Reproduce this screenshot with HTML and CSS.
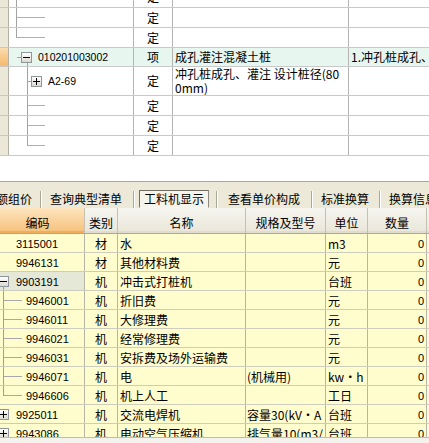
FILE: index.html
```html
<!DOCTYPE html>
<html lang="zh">
<head>
<meta charset="utf-8">
<title>工料机显示</title>
<link rel="stylesheet" href="styles.css">
</head>
<body>
<div class="app">
  <section class="top">
    <div class="tgrid">
      <div class="trow r0">
        <div class="tg"></div>
        <div class="tc t-code la-full"></div>
        <div class="tc t-type">定</div>
        <div class="tc t-name"></div>
        <div class="tc t-desc"></div>
      </div>
      <div class="trow r1">
        <div class="tg"></div>
        <div class="tc t-code la-mid"></div>
        <div class="tc t-type">定</div>
        <div class="tc t-name"></div>
        <div class="tc t-desc"></div>
      </div>
      <div class="trow r2">
        <div class="tg"></div>
        <div class="tc t-code la-end"></div>
        <div class="tc t-type">定</div>
        <div class="tc t-name"></div>
        <div class="tc t-desc"></div>
      </div>
      <div class="trow r3 hl">
        <div class="tg sel"></div>
        <div class="tc t-code l-parent"><span class="tbox minus b1"></span><span class="tcode">010201003002</span></div>
        <div class="tc t-type">项</div>
        <div class="tc t-name">成孔灌注混凝土桩</div>
        <div class="tc t-desc">1.冲孔桩成孔、</div>
      </div>
      <div class="trow r4">
        <div class="tg"></div>
        <div class="tc t-code l-child"><span class="tbox plus b2"></span><span class="tcode">A2-69</span></div>
        <div class="tc t-type">定</div>
        <div class="tc t-name wrap">冲孔桩成孔、灌注 设计桩径(80<br>0mm)</div>
        <div class="tc t-desc"></div>
      </div>
      <div class="trow r5">
        <div class="tg"></div>
        <div class="tc t-code lb-mid"></div>
        <div class="tc t-type">定</div>
        <div class="tc t-name"></div>
        <div class="tc t-desc"></div>
      </div>
      <div class="trow r6">
        <div class="tg"></div>
        <div class="tc t-code lb-mid"></div>
        <div class="tc t-type">定</div>
        <div class="tc t-name"></div>
        <div class="tc t-desc"></div>
      </div>
      <div class="trow r7">
        <div class="tg"></div>
        <div class="tc t-code lb-end"></div>
        <div class="tc t-type">定</div>
        <div class="tc t-name"></div>
        <div class="tc t-desc"></div>
      </div>
    </div>
  </section>

  <section class="bottom">
    <div class="toolbar">
      <span class="tb-item first">定额组价</span>
      <span class="tb-sep s1"></span>
      <span class="tb-item i2">查询典型清单</span>
      <span class="tb-sep s2"></span>
      <span class="tb-item pressed">工料机显示</span>
      <span class="tb-sep s3"></span>
      <span class="tb-item i4">查看单价构成</span>
      <span class="tb-sep s4"></span>
      <span class="tb-item i5">标准换算</span>
      <span class="tb-sep s5"></span>
      <span class="tb-item i6">换算信息</span>
    </div>

    <div class="bwrap">
      <div class="bgrid">
        <div class="bhead">
          <div class="hc c-code sel">编码</div>
          <div class="hc c-type">类别</div>
          <div class="hc c-name">名称</div>
          <div class="hc c-spec">规格及型号</div>
          <div class="hc c-unit">单位</div>
          <div class="hc c-qty">数量</div>
          <div class="hc c-fill"></div>
        </div>

        <div class="brow">
          <div class="bc c-code"><span class="bcode root">3115001</span></div>
          <div class="bc c-type">材</div>
          <div class="bc c-name">水</div>
          <div class="bc c-spec"></div>
          <div class="bc c-unit">m3</div>
          <div class="bc c-qty">0</div>
          <div class="bc c-fill"></div>
        </div>
        <div class="brow">
          <div class="bc c-code"><span class="bcode root">9946131</span></div>
          <div class="bc c-type">材</div>
          <div class="bc c-name">其他材料费</div>
          <div class="bc c-spec"></div>
          <div class="bc c-unit">元</div>
          <div class="bc c-qty">0</div>
          <div class="bc c-fill"></div>
        </div>
        <div class="brow">
          <div class="bc c-code focus bl-parent"><span class="tbox minus bb"></span><span class="bcode">9903191</span></div>
          <div class="bc c-type">机</div>
          <div class="bc c-name">冲击式打桩机</div>
          <div class="bc c-spec"></div>
          <div class="bc c-unit">台班</div>
          <div class="bc c-qty">0</div>
          <div class="bc c-fill"></div>
        </div>
        <div class="brow">
          <div class="bc c-code bl-mid"><span class="bcode child">9946001</span></div>
          <div class="bc c-type">机</div>
          <div class="bc c-name">折旧费</div>
          <div class="bc c-spec"></div>
          <div class="bc c-unit">元</div>
          <div class="bc c-qty">0</div>
          <div class="bc c-fill"></div>
        </div>
        <div class="brow">
          <div class="bc c-code bl-mid"><span class="bcode child">9946011</span></div>
          <div class="bc c-type">机</div>
          <div class="bc c-name">大修理费</div>
          <div class="bc c-spec"></div>
          <div class="bc c-unit">元</div>
          <div class="bc c-qty">0</div>
          <div class="bc c-fill"></div>
        </div>
        <div class="brow">
          <div class="bc c-code bl-mid"><span class="bcode child">9946021</span></div>
          <div class="bc c-type">机</div>
          <div class="bc c-name">经常修理费</div>
          <div class="bc c-spec"></div>
          <div class="bc c-unit">元</div>
          <div class="bc c-qty">0</div>
          <div class="bc c-fill"></div>
        </div>
        <div class="brow">
          <div class="bc c-code bl-mid"><span class="bcode child">9946031</span></div>
          <div class="bc c-type">机</div>
          <div class="bc c-name">安拆费及场外运输费</div>
          <div class="bc c-spec"></div>
          <div class="bc c-unit">元</div>
          <div class="bc c-qty">0</div>
          <div class="bc c-fill"></div>
        </div>
        <div class="brow">
          <div class="bc c-code bl-mid"><span class="bcode child">9946071</span></div>
          <div class="bc c-type">机</div>
          <div class="bc c-name">电</div>
          <div class="bc c-spec">(机械用)</div>
          <div class="bc c-unit">kw·h</div>
          <div class="bc c-qty">0</div>
          <div class="bc c-fill"></div>
        </div>
        <div class="brow">
          <div class="bc c-code bl-end"><span class="bcode child">9946606</span></div>
          <div class="bc c-type">机</div>
          <div class="bc c-name">机上人工</div>
          <div class="bc c-spec"></div>
          <div class="bc c-unit">工日</div>
          <div class="bc c-qty">0</div>
          <div class="bc c-fill"></div>
        </div>
        <div class="brow">
          <div class="bc c-code"><span class="tbox plus bb"></span><span class="bcode">9925011</span></div>
          <div class="bc c-type">机</div>
          <div class="bc c-name">交流电焊机</div>
          <div class="bc c-spec">容量30(kV·A</div>
          <div class="bc c-unit">台班</div>
          <div class="bc c-qty">0</div>
          <div class="bc c-fill"></div>
        </div>
        <div class="brow">
          <div class="bc c-code"><span class="tbox plus bb"></span><span class="bcode">9943086</span></div>
          <div class="bc c-type">机</div>
          <div class="bc c-name">电动空气压缩机</div>
          <div class="bc c-spec">排气量10(m3/</div>
          <div class="bc c-unit">台班</div>
          <div class="bc c-qty">0</div>
          <div class="bc c-fill"></div>
        </div>
      </div>
    </div>
    <div class="hscroll"></div>
  </section>
</div>
</body>
</html>
```

FILE: styles.css
```css
* { box-sizing: border-box; margin: 0; padding: 0; }

html, body {
  width: 429px;
  height: 443px;
  overflow: hidden;
  background: #ffffff;
}

body {
  font-family: "Noto Sans CJK SC", sans-serif;
  font-size: 12px;
  color: #000;
}

.app { width: 429px; height: 443px; overflow: hidden; }

/* ---------- top grid ---------- */
.top {
  height: 181px;
  overflow: hidden;
  background: #fff;
}

.tgrid { margin-top: -13px; }

.trow {
  display: flex;
  border-bottom: 1px solid #c9c9c9;
}
.r0 { height: 21px; }
.r1, .r2, .r5, .r6, .r7 { height: 20px; }
.r3 { height: 19px; }
.r4 { height: 29px; }

.tg {
  width: 9px;
  flex: none;
  background: #ebe8d7;
  border-right: 1px solid #b3b1a6;
}
.tg.sel { background: linear-gradient(#fcdcae, #f6b86c); }

.tc {
  display: flex;
  align-items: center;
  flex: none;
  border-right: 1px solid #b4b4b4;
  overflow: hidden;
  white-space: nowrap;
  line-height: 14px;
}

.hl .tc { background-color: #e7f6ef; }

.t-code { width: 125px; }
.t-type { width: 39px; justify-content: center; }
.t-name { width: 176px; padding-left: 2px; }
.t-desc { flex: 1; padding-left: 2px; border-right: none; }

.t-name.wrap { line-height: 14px; white-space: nowrap; }

.tcode {
  font-family: "Liberation Sans", sans-serif;
  font-size: 10.5px;
  margin-left: 6px;
}

/* tree connector lines (top grid) */
.la-full {
  background: linear-gradient(#a3a3a3, #a3a3a3) 7px 0 / 1px 100% no-repeat;
}
.la-mid {
  background:
    linear-gradient(#a3a3a3, #a3a3a3) 7px 0 / 1px 100% no-repeat,
    linear-gradient(#b0b0b0, #b0b0b0) 7px 50% / 29px 1px no-repeat;
}
.la-end {
  background:
    linear-gradient(#a3a3a3, #a3a3a3) 7px 0 / 1px 50% no-repeat,
    linear-gradient(#b0b0b0, #b0b0b0) 7px 50% / 29px 1px no-repeat;
}
.l-parent {
  background:
    linear-gradient(#a3a3a3, #a3a3a3) 8px 50% / 4px 1px no-repeat,
    linear-gradient(#a3a3a3, #a3a3a3) 18px 100% / 1px 50% no-repeat,
    #e7f6ef;
}
.l-child {
  background:
    linear-gradient(#a3a3a3, #a3a3a3) 18px 0 / 1px 100% no-repeat,
    linear-gradient(#a3a3a3, #a3a3a3) 18px 50% / 4px 1px no-repeat;
}
.lb-mid {
  background:
    linear-gradient(#a3a3a3, #a3a3a3) 18px 0 / 1px 100% no-repeat,
    linear-gradient(#b0b0b0, #b0b0b0) 18px 50% / 18px 1px no-repeat;
}
.lb-end {
  background:
    linear-gradient(#a3a3a3, #a3a3a3) 18px 0 / 1px 50% no-repeat,
    linear-gradient(#b0b0b0, #b0b0b0) 18px 50% / 18px 1px no-repeat;
}

/* expand / collapse boxes */
.tbox {
  flex: none;
  width: 11px;
  height: 11px;
  border: 1px solid #8f9699;
}
.tbox.minus {
  background:
    linear-gradient(#000, #000) center / 7px 1px no-repeat,
    linear-gradient(#ffffff, #dcd9cf);
}
.tbox.plus {
  background:
    linear-gradient(#000, #000) center / 7px 1px no-repeat,
    linear-gradient(#000, #000) center / 1px 7px no-repeat,
    linear-gradient(#ffffff, #dcd9cf);
}
.b1 { margin-left: 12px; }
.b2 { margin-left: 22px; }
.bb { margin-left: 7px; width: 11px; height: 11px; }

/* ---------- bottom panel ---------- */
.bottom { overflow: hidden; }

.toolbar {
  height: 27px;
  border-top: 1px solid #a3a6a8;
  background: #ece9d8;
  display: flex;
  align-items: flex-end;
  overflow: hidden;
  white-space: nowrap;
}

.tb-item {
  flex: none;
  line-height: 16px;
  padding-bottom: 1px;
}
.tb-item.first { margin-left: -16px; }
.tb-item.i2 { margin-left: 8px; }
.tb-item.i4 { margin-left: 10px; }
.tb-item.i5 { margin-left: 8px; }
.tb-item.i6 { margin-left: 8px; }

.tb-item.pressed {
  margin-left: 4px;
  height: 18px;
  padding: 0 4px;
  line-height: 16px;
  border: 1px solid;
  border-color: #716f64 #8d8b80 #f6f5ef #716f64;
  background: #f4f3ec;
}

.tb-sep {
  flex: none;
  width: 2px;
  height: 17px;
  border-left: 1px solid #aca899;
  border-right: 1px solid #ffffff;
}
.s1 { margin-left: 8px; }
.s2 { margin-left: 11px; }
.s3 { margin-left: 7px; }
.s4 { margin-left: 11px; }
.s5 { margin-left: 10px; }

.bwrap {
  height: 229px;
  overflow: hidden;
}

.bgrid {
  margin-left: -9px;
  width: 438px;
}

.bhead {
  display: flex;
  height: 26px;
  border-bottom: 1px solid #aca899;
}

.hc {
  flex: none;
  text-align: center;
  padding-top: 7px;
  line-height: 16px;
  background: linear-gradient(#f6f5ef, #e9e6d8);
  border-right: 1px solid #c4c1b3;
  box-shadow: inset 0 -2px 0 #e0ddcf;
}
.hc.sel {
  background: linear-gradient(#fde5bf, #f6bf78);
  box-shadow: inset 0 -2px 0 #f2ad5c;
}

.c-code { width: 94px; }
.c-type { width: 33px; }
.c-name { width: 128px; }
.c-spec { width: 80px; }
.c-unit { width: 42px; }
.c-qty { width: 59px; }
.c-fill { flex: 1; border-right: none; }

.brow {
  display: flex;
  height: 19px;
  border-bottom: 1px solid #cdcdbd;
  background: #fffcce;
}

.bc {
  flex: none;
  display: flex;
  align-items: center;
  border-right: 1px solid #b5b5a8;
  overflow: hidden;
  white-space: nowrap;
  line-height: 14px;
  padding-top: 1px;
}
.bc.c-fill { flex: 1; border-right: none; }
.bc.c-type { justify-content: center; }
.bc.c-name { padding-left: 2px; }
.bc.c-spec { padding-left: 1px; }
.bc.c-unit { padding-left: 2px; }
.bc.c-qty {
  justify-content: flex-end;
  padding-right: 2px;
  font-family: "Liberation Sans", sans-serif;
  font-size: 11px;
}

.bc.focus { background-color: #e5e7d7; }

.bcode {
  font-family: "Liberation Sans", sans-serif;
  font-size: 11px;
  margin-left: 7px;
}
.bcode.root { margin-left: 25px; }
.bcode.child { margin-left: 35px; }

.bl-parent {
  background:
    linear-gradient(#a0a0a0, #a0a0a0) 12px 100% / 1px 50% no-repeat,
    #e5e7d7;
}
.bl-mid {
  background:
    linear-gradient(#a0a0a0, #a0a0a0) 12px 0 / 1px 100% no-repeat,
    linear-gradient(#a8a8a8, #a8a8a8) 12px 55% / 19px 1px no-repeat;
}
.bl-end {
  background:
    linear-gradient(#a0a0a0, #a0a0a0) 12px 0 / 1px 55% no-repeat,
    linear-gradient(#a8a8a8, #a8a8a8) 12px 55% / 19px 1px no-repeat;
}

.hscroll {
  height: 6px;
  border-top: 1px solid #b9bcc2;
  background: #f3f2ec;
}
```
